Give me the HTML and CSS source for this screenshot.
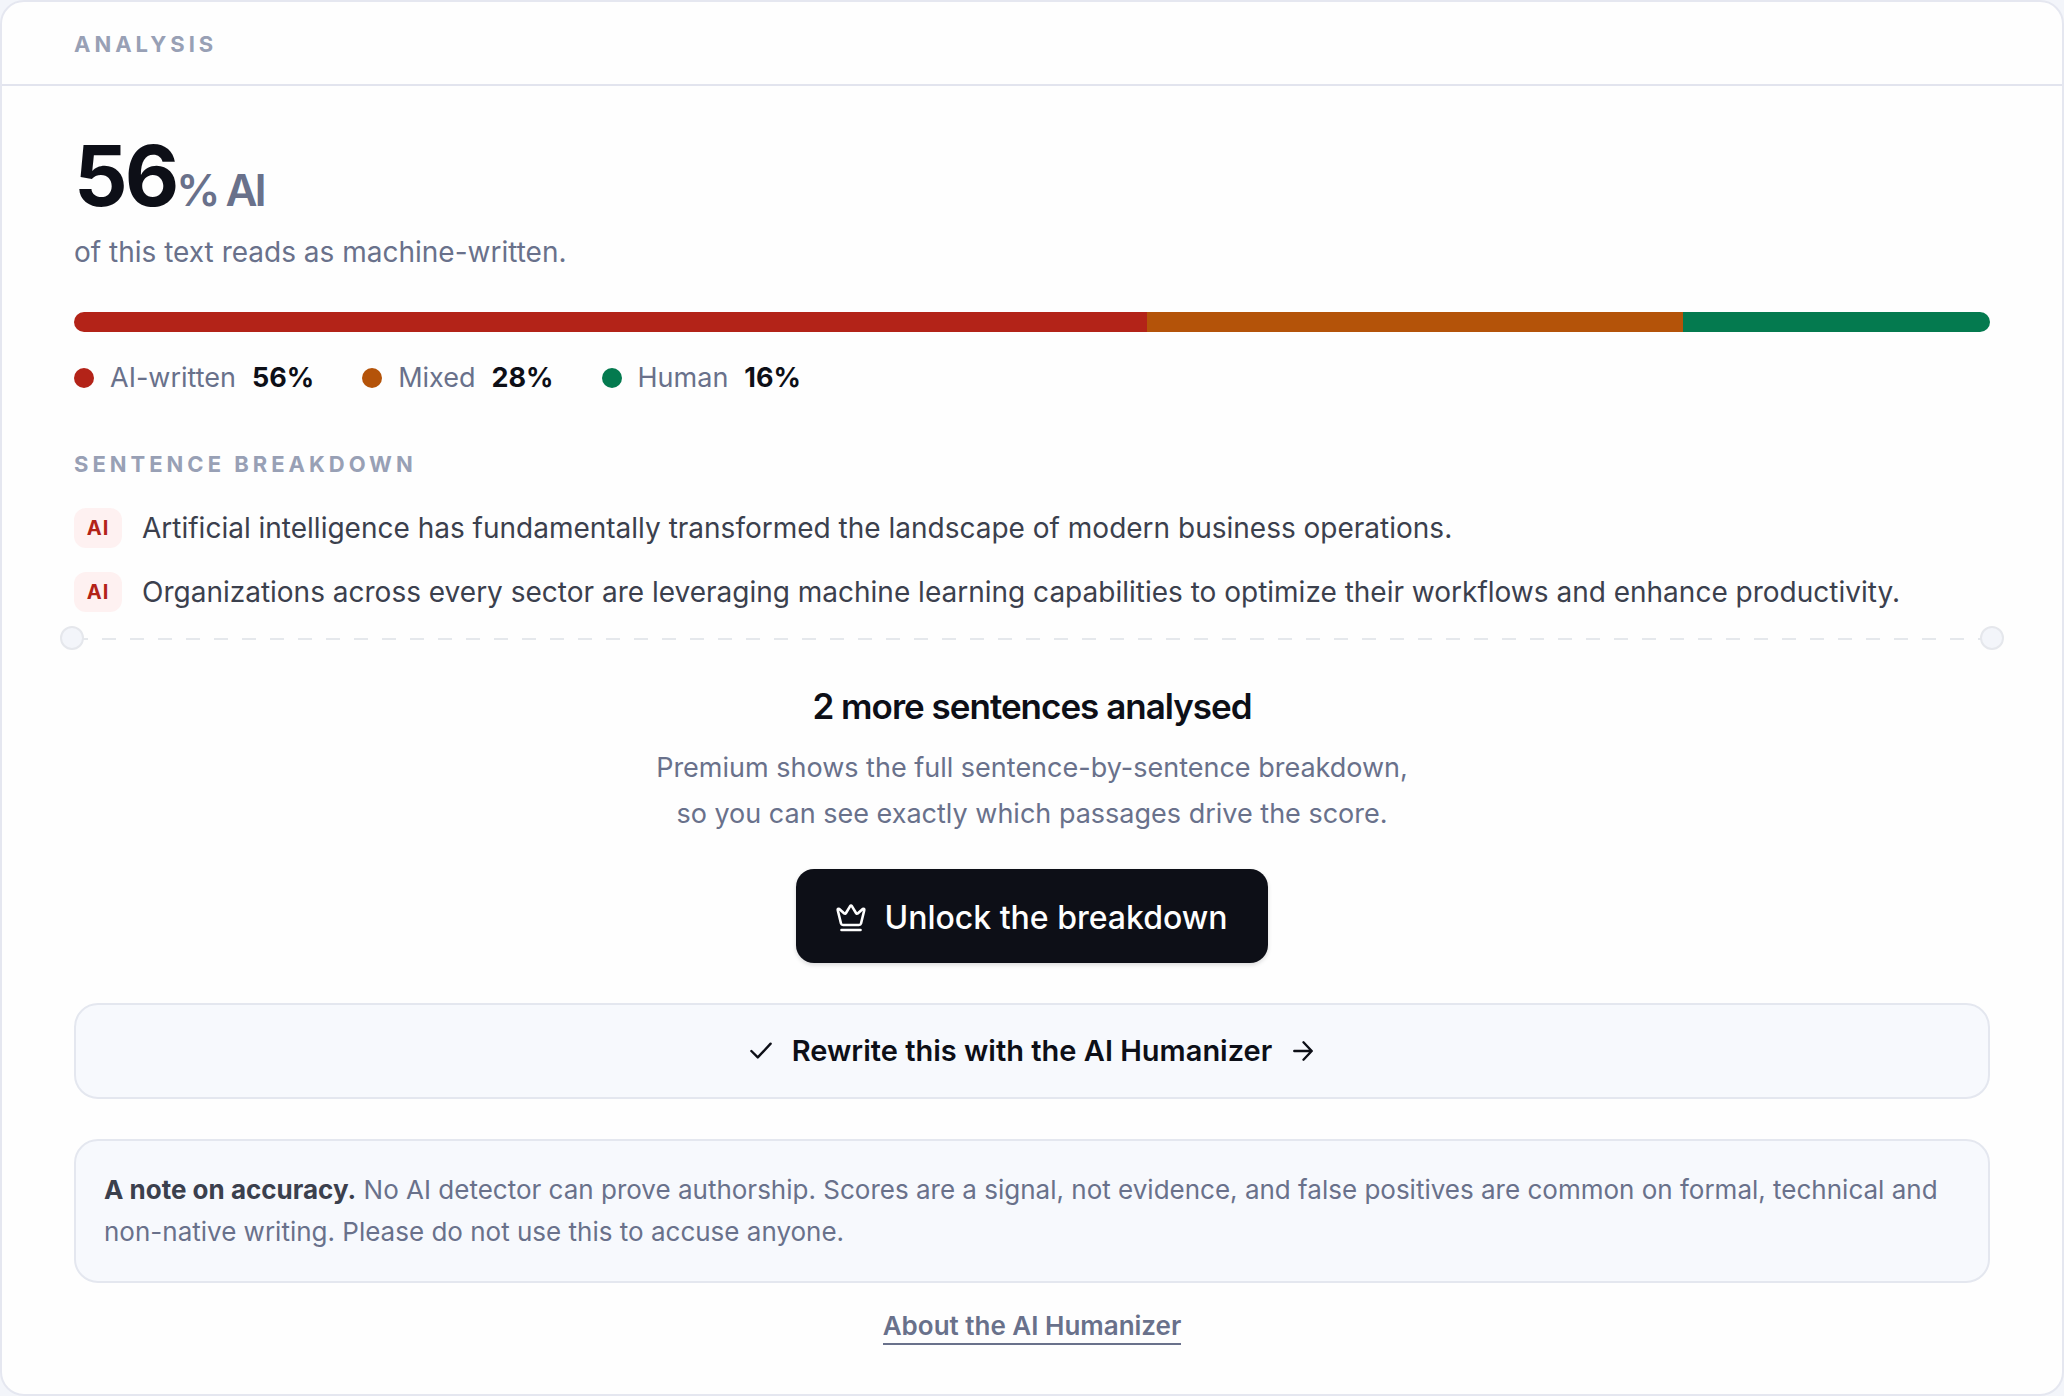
FILE: index.html
```html
<!DOCTYPE html>
<html lang="en">
<head>
<meta charset="utf-8">
<meta name="viewport" content="width=device-width, initial-scale=1">
<title>Analysis</title>
<link rel="stylesheet" href="styles.css">
</head>
<body>
<main class="card">
  <header class="card-header">
    <h1 class="eyebrow">Analysis</h1>
  </header>
  <div class="card-body">
    <p class="score">56<span class="score-unit">% AI</span></p>
    <p class="score-caption">of this text reads as machine-written.</p>

    <div class="bar">
      <span class="bar-part ai" style="width: 56%"></span>
      <span class="bar-part mixed" style="width: 28%"></span>
      <span class="bar-part human" style="width: 16%"></span>
    </div>
    <ul class="legend">
      <li class="legend-item"><span class="dot ai"></span>AI-written <b class="legend-value">56%</b></li>
      <li class="legend-item"><span class="dot mixed"></span>Mixed <b class="legend-value">28%</b></li>
      <li class="legend-item"><span class="dot human"></span>Human <b class="legend-value">16%</b></li>
    </ul>

    <h2 class="eyebrow breakdown-title">Sentence breakdown</h2>
    <ul class="sentences">
      <li class="sentence"><span class="badge">AI</span>Artificial intelligence has fundamentally transformed the landscape of modern business operations.</li>
      <li class="sentence"><span class="badge">AI</span>Organizations across every sector are leveraging machine learning capabilities to optimize their workflows and enhance productivity.</li>
    </ul>

    <section class="locked">
      <h2 class="locked-title">2 more sentences analysed</h2>
      <p class="locked-text">Premium shows the full sentence-by-sentence breakdown,<br>so you can see exactly which passages drive the score.</p>
      <button class="unlock" type="button">
        <svg class="crown" viewBox="0 0 30 30" fill="none" stroke="currentColor" stroke-width="2.600" stroke-linecap="round" stroke-linejoin="round" aria-hidden="true">
          <path d="M1.800 7.500Q1.200 5 3.300 6L8.300 10.500Q9.300 11.200 10 10L14 3.300Q15 2 16 3.300L20 10Q20.700 11.200 21.700 10.500L26.700 6Q28.800 5 28.200 7.500L25 20.500Q24.600 22 23 22H7Q5.400 22 5 20.500Z"/>
          <path d="M5.500 27H24.500"/>
        </svg>
        Unlock the breakdown
      </button>
    </section>

    <a class="rewrite" href="#humanizer">
      <svg class="check" viewBox="0 0 24 24" fill="none" stroke="currentColor" stroke-width="2.600" stroke-linecap="round" stroke-linejoin="round" aria-hidden="true"><path d="M1.500 12L8.500 19L22.500 4"/></svg>
      Rewrite this with the AI Humanizer
      <svg class="arrow" viewBox="0 0 24 24" fill="none" stroke="currentColor" stroke-width="2.600" stroke-linecap="round" stroke-linejoin="round" aria-hidden="true"><path d="M2.500 12H21.500M12.500 2.500L21.500 12L12.500 21.500"/></svg>
    </a>

    <p class="note"><strong class="note-lead">A note on accuracy.</strong> No AI detector can prove authorship. Scores are a signal, not evidence, and false positives are common on formal, technical and non-native writing. Please do not use this to accuse anyone.</p>

    <a class="about" href="#about">About the AI Humanizer</a>
  </div>
</main>
</body>
</html>
```
FILE: styles.css
```css
*,
*::before,
*::after {
  box-sizing: border-box;
  margin: 0;
  padding: 0;
}

body {
  background: #f3f5fa;
  color: #0d0f17;
  font-family: Inter, "Liberation Sans", sans-serif;
  font-optical-sizing: none;
  font-size: 28px;
  line-height: 40px;
}

ul {
  list-style: none;
}

.card {
  min-height: 100vh;
  background: #fefefe;
  border: 2px solid #e5e7f0;
  border-radius: 24px;
  overflow: hidden;
}

.card-header {
  padding: 22px 72px 20px;
  border-bottom: 2px solid #e2e4ee;
}

.eyebrow {
  color: #98a0b5;
  font-size: 22px;
  font-weight: 700;
  letter-spacing: 4px;
  line-height: 40px;
  text-transform: uppercase;
}

.card-body {
  display: flex;
  flex-direction: column;
  padding: 48px 72px;
}

.score {
  font-size: 84px;
  font-weight: 700;
  letter-spacing: -3px;
  line-height: 84px;
}

.score-unit {
  color: #69718b;
  font-size: 44px;
  font-weight: 600;
}

.score-caption {
  color: #69718b;
}

.bar {
  display: flex;
  height: 20px;
  margin-top: 40px;
  border-radius: 10px;
  overflow: hidden;
}

.ai {
  background: #b32318;
}

.mixed {
  background: #b45309;
}

.human {
  background: #047a4f;
}

.legend {
  display: flex;
  gap: 48px;
  margin-top: 26px;
  color: #69718b;
  font-size: 27px;
}

.legend-item {
  display: flex;
  align-items: center;
  gap: 16px;
}

.dot {
  width: 20px;
  height: 20px;
  border-radius: 50%;
}

.legend-value {
  color: #0d0f17;
  font-weight: 700;
}

.breakdown-title {
  margin-top: 46px;
}

.sentences {
  display: flex;
  flex-direction: column;
  gap: 24px;
  margin-top: 24px;
  color: #3b404d;
}

.sentence {
  display: flex;
  align-items: center;
  gap: 20px;
}

.badge {
  min-width: 48px;
  border-radius: 12px;
  background: #fef1f1;
  color: #b32318;
  font-size: 20px;
  font-weight: 700;
  letter-spacing: 1px;
  text-align: center;
}

.locked {
  position: relative;
  display: flex;
  flex-direction: column;
  align-items: center;
  margin-top: 26px;
  padding-top: 44px;
  background: repeating-linear-gradient(90deg, #e5e8ec 0 14px, transparent 14px 28px) top / 100% 2px no-repeat;
  text-align: center;
}

.locked::before,
.locked::after {
  content: "";
  position: absolute;
  top: -12px;
  width: 24px;
  height: 24px;
  border: 2px solid #e5e7ec;
  border-radius: 50%;
  background: #f3f5fa;
}

.locked::before {
  left: -14px;
}

.locked::after {
  right: -14px;
}

.locked-title {
  font-size: 35px;
  font-weight: 600;
  letter-spacing: -1px;
  line-height: 48px;
}

.locked-text {
  margin-top: 15px;
  color: #69718b;
  font-size: 27px;
  line-height: 46px;
}

.unlock {
  display: flex;
  align-items: center;
  gap: 18px;
  margin-top: 32px;
  padding: 26px 40px 22px;
  border: 0;
  border-radius: 18px;
  background: #0d0f17;
  box-shadow: 0 2px 4px #0d0f1726;
  color: #fefefe;
  font: inherit;
  font-size: 32px;
  font-weight: 500;
  line-height: 46px;
}

.crown {
  width: 30px;
  height: 30px;
}

.rewrite {
  display: flex;
  align-items: center;
  justify-content: center;
  gap: 20px;
  margin-top: 40px;
  padding: 26px;
  border: 2px solid #e4e7ef;
  border-radius: 24px;
  background: #f7f9fd;
  color: #0d0f17;
  font-size: 29px;
  font-weight: 600;
  text-decoration: none;
}

.check,
.arrow {
  width: 22px;
  height: 22px;
}

.note {
  margin-top: 40px;
  padding: 28px;
  border: 2px solid #e4e7ef;
  border-radius: 24px;
  background: #f7f9fd;
  color: #69718b;
  font-size: 26px;
  line-height: 42px;
}

.note-lead {
  color: #3b404d;
  font-weight: 700;
}

.about {
  align-self: center;
  margin-top: 26px;
  border-bottom: 2px solid #69718b;
  color: #69718b;
  font-size: 26px;
  font-weight: 600;
  line-height: 34px;
  text-decoration: none;
}
```
